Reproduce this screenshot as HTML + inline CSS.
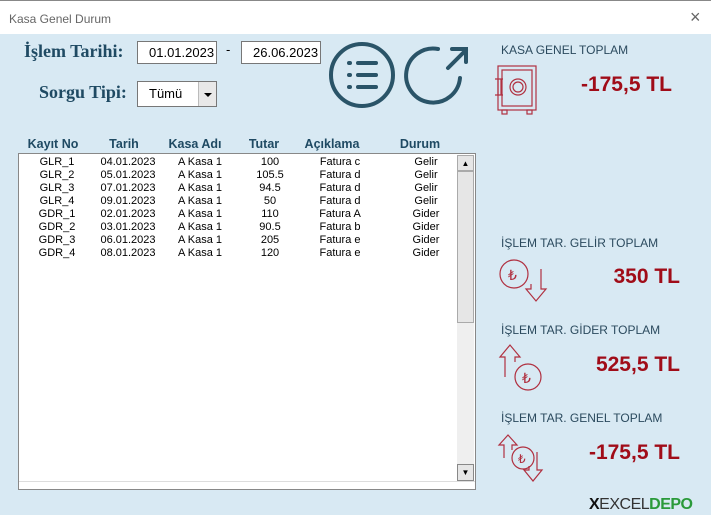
<!DOCTYPE html>
<html><head><meta charset="utf-8"><style>
body{margin:0;width:711px;height:515px;background:#d8e9f3;font-family:"Liberation Sans",sans-serif;position:relative;overflow:hidden}
.abs{position:absolute}
.title{left:0;top:0;width:711px;height:33px;background:#fff;border-top:1px solid #888}
.lbl{font-family:"Liberation Serif",serif;font-weight:bold;color:#1f4a63;font-size:18px}
.box{background:#fff;border:1px solid #777;font-size:13px;color:#000;box-sizing:border-box}
.hd{font-size:12.5px;font-weight:bold;color:#1f4a63;top:137px;transform:translateX(-50%)}
.row{font-size:11px;color:#000;line-height:13px}
.row span{position:absolute;transform:translateX(-50%);white-space:nowrap}
.cap{font-size:12px;color:#2b4a5e}
.val{font-size:21px;font-weight:bold;color:#a00c18;text-align:right;width:200px}
</style></head><body>
<div class="abs title"><div class="abs" style="left:9px;top:11px;font-size:12px;color:#666">Kasa Genel Durum</div>
<div class="abs" style="left:690px;top:6px;font-size:18px;color:#666">×</div></div>
<div class="abs lbl" style="left:24px;top:41px">İşlem Tarihi:</div>
<div class="abs lbl" style="left:39px;top:82px">Sorgu Tipi:</div>
<div class="abs box" style="left:137px;top:41px;width:80px;height:23px;padding:3px 0 0 11px">01.01.2023</div>
<div class="abs" style="left:226px;top:42px;font-size:13px">-</div>
<div class="abs box" style="left:241px;top:41px;width:80px;height:23px;padding:3px 0 0 11px">26.06.2023</div>
<div class="abs box" style="left:137px;top:81px;width:80px;height:26px;padding:4px 0 0 11px">Tümü
<div class="abs" style="right:0;top:0;width:17px;height:24px;background:#e8e8e8;border-left:1px solid #bbb"><div class="abs" style="left:5px;top:11px;border:4px solid transparent;border-top:4px solid #000;border-bottom:0"></div></div></div>
<svg class="abs" style="left:328px;top:40px" width="150" height="72">
<g fill="none" stroke="#2a5468" stroke-width="4" stroke-linecap="round">
<circle cx="34" cy="35" r="31"/>
<line x1="21" y1="23" x2="22" y2="23"/><line x1="21" y1="35" x2="22" y2="35"/><line x1="21" y1="47" x2="22" y2="47"/>
<line x1="30" y1="23" x2="48" y2="23"/><line x1="30" y1="35" x2="48" y2="35"/><line x1="30" y1="47" x2="48" y2="47"/>
<path d="M132 38 A27 27 0 1 1 110 9"/>
<path d="M120 28 L138 10 M124 9 L138 9 L138 22"/>
</g></svg>
<div class="abs hd" style="left:53px">Kayıt No</div>
<div class="abs hd" style="left:124px">Tarih</div>
<div class="abs hd" style="left:195px">Kasa Adı</div>
<div class="abs hd" style="left:264px">Tutar</div>
<div class="abs hd" style="left:332px">Açıklama</div>
<div class="abs hd" style="left:420px">Durum</div>
<div class="abs" style="left:18px;top:153px;width:458px;height:337px;background:#fff;border:1px solid #888;box-sizing:border-box">
<div class="abs" style="left:0;top:327px;width:456px;height:1px;background:#ddd"></div>
<div class="abs" style="left:438px;top:1px;width:17px;height:326px;background:#efefef"></div>
<div class="abs" style="left:438px;top:1px;width:17px;height:16px;background:#e6e6e6;border:1px solid #aaa;box-sizing:border-box;font-size:8px;text-align:center;line-height:15px">▲</div>
<div class="abs" style="left:438px;top:17px;width:17px;height:152px;background:#e6e6e6;border:1px solid #aaa;box-sizing:border-box"></div>
<div class="abs" style="left:438px;top:310px;width:17px;height:17px;background:#e6e6e6;border:1px solid #888;box-sizing:border-box;font-size:8px;text-align:center;line-height:16px">▼</div>
</div>
<div class="abs row" style="left:0;top:156px;width:480px">
<div style="position:relative;height:13px"><span style="left:57px">GLR_1</span><span style="left:128px">04.01.2023</span><span style="left:200px">A Kasa 1</span><span style="left:270px">100</span><span style="left:340px">Fatura c</span><span style="left:426px">Gelir</span></div>
<div style="position:relative;height:13px"><span style="left:57px">GLR_2</span><span style="left:128px">05.01.2023</span><span style="left:200px">A Kasa 1</span><span style="left:270px">105.5</span><span style="left:340px">Fatura d</span><span style="left:426px">Gelir</span></div>
<div style="position:relative;height:13px"><span style="left:57px">GLR_3</span><span style="left:128px">07.01.2023</span><span style="left:200px">A Kasa 1</span><span style="left:270px">94.5</span><span style="left:340px">Fatura d</span><span style="left:426px">Gelir</span></div>
<div style="position:relative;height:13px"><span style="left:57px">GLR_4</span><span style="left:128px">09.01.2023</span><span style="left:200px">A Kasa 1</span><span style="left:270px">50</span><span style="left:340px">Fatura d</span><span style="left:426px">Gelir</span></div>
<div style="position:relative;height:13px"><span style="left:57px">GDR_1</span><span style="left:128px">02.01.2023</span><span style="left:200px">A Kasa 1</span><span style="left:270px">110</span><span style="left:340px">Fatura A</span><span style="left:426px">Gider</span></div>
<div style="position:relative;height:13px"><span style="left:57px">GDR_2</span><span style="left:128px">03.01.2023</span><span style="left:200px">A Kasa 1</span><span style="left:270px">90.5</span><span style="left:340px">Fatura b</span><span style="left:426px">Gider</span></div>
<div style="position:relative;height:13px"><span style="left:57px">GDR_3</span><span style="left:128px">06.01.2023</span><span style="left:200px">A Kasa 1</span><span style="left:270px">205</span><span style="left:340px">Fatura e</span><span style="left:426px">Gider</span></div>
<div style="position:relative;height:13px"><span style="left:57px">GDR_4</span><span style="left:128px">08.01.2023</span><span style="left:200px">A Kasa 1</span><span style="left:270px">120</span><span style="left:340px">Fatura e</span><span style="left:426px">Gider</span></div>
</div>
<div class="abs cap" style="left:501px;top:43px">KASA GENEL TOPLAM</div>
<div class="abs val" style="left:472px;top:73px">-175,5 TL</div>
<div class="abs cap" style="left:501px;top:236px">İŞLEM TAR. GELİR TOPLAM</div>
<div class="abs val" style="left:480px;top:265px">350 TL</div>
<div class="abs cap" style="left:501px;top:323px">İŞLEM TAR. GİDER TOPLAM</div>
<div class="abs val" style="left:480px;top:353px">525,5 TL</div>
<div class="abs cap" style="left:501px;top:411px">İŞLEM TAR. GENEL TOPLAM</div>
<div class="abs val" style="left:480px;top:441px">-175,5 TL</div>
<svg class="abs" style="left:490px;top:60px" width="60" height="60" fill="none" stroke="#b03040" stroke-width="1.2">
<rect x="8" y="6" width="38" height="44"/><rect x="12" y="10" width="30" height="36"/>
<circle cx="28" cy="27" r="8"/><circle cx="28" cy="27" r="5"/>
<path d="M5 19h8M5 35h8M8 19v16M11 19v16"/><rect x="12" y="50" width="5" height="4"/><rect x="37" y="50" width="5" height="4"/></svg>
<svg class="abs" style="left:495px;top:255px" width="60" height="55" fill="none" stroke="#b03040" stroke-width="1.2">
<circle cx="19" cy="19" r="14"/><path d="M46 14v20h5l-10 12-10-12h5v-5"/><text x="13" y="25" font-size="14" fill="#b03040" stroke="none">₺</text></svg>
<svg class="abs" style="left:495px;top:342px" width="60" height="55" fill="none" stroke="#b03040" stroke-width="1.2">
<path d="M10 35V15H5l10-12 10 12h-5v5"/><circle cx="33" cy="35" r="13"/><text x="27" y="41" font-size="14" fill="#b03040" stroke="none">₺</text></svg>
<svg class="abs" style="left:495px;top:430px" width="60" height="60" fill="none" stroke="#b03040" stroke-width="1.2">
<path d="M9 28V15H4l9-10 9 10h-5v5"/><circle cx="28" cy="28" r="11"/><path d="M42 22v18h5l-9 11-9-11h5v-4"/><text x="23" y="33" font-size="12" fill="#b03040" stroke="none">₺</text></svg>
<div class="abs" style="left:589px;top:496px;font-size:16px;color:#333;letter-spacing:-0.5px"><b style="color:#111">X</b>EXCEL<b style="color:#2a9a3a">DEPO</b></div>
</body></html>
